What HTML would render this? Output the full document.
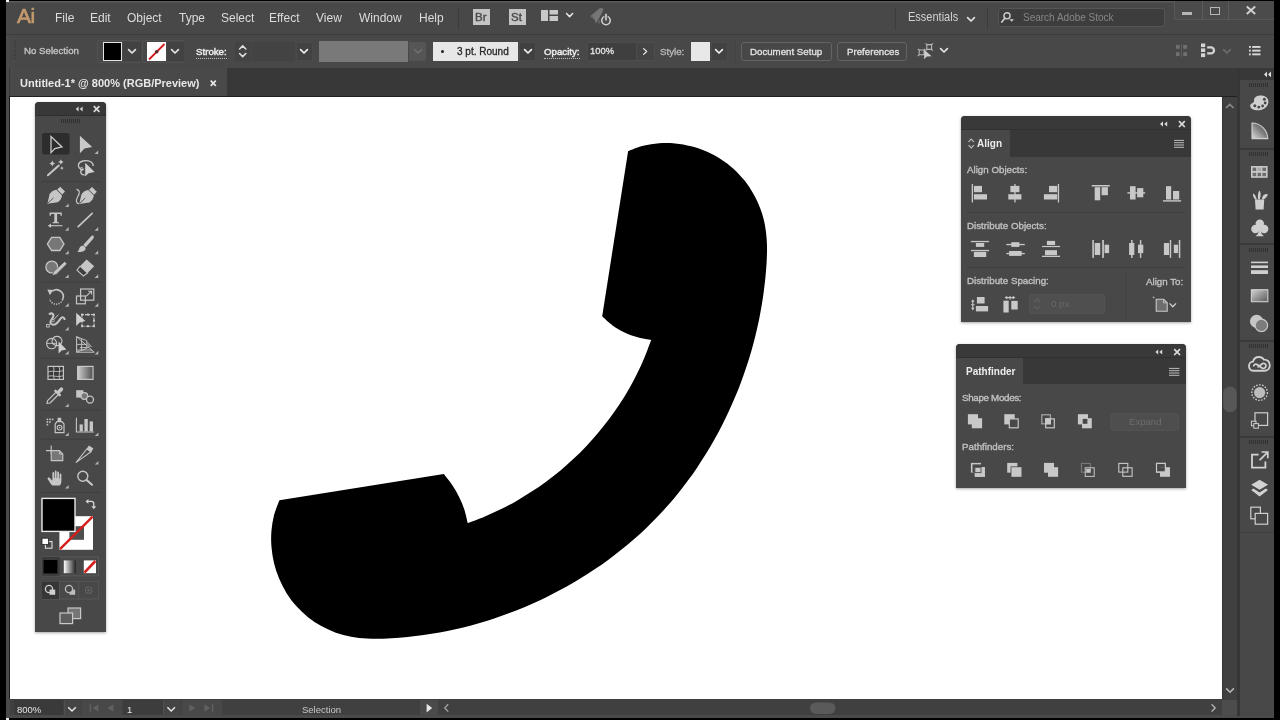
<!DOCTYPE html>
<html>
<head>
<meta charset="utf-8">
<title>Adobe Illustrator</title>
<style>
*{box-sizing:border-box;margin:0;padding:0}
html,body{width:1280px;height:720px;overflow:hidden;background:#000}
body{font-family:"Liberation Sans",sans-serif;position:relative;color:#d6d6d6}
.a{position:absolute}
.t{position:absolute;white-space:nowrap;line-height:1;will-change:transform}
svg{position:absolute;overflow:visible}
/* frame */
#frame{left:6px;top:1px;width:1268px;height:717px;background:#4a4a4a}
#menubar{left:6px;top:1px;width:1268px;height:33px;background:#484848}
#ctrl{left:9px;top:35px;width:1265px;height:33px;background:#484848}
#tabbar{left:9px;top:68px;width:1228px;height:28.5px;background:#383838}
#tab{left:10px;top:68px;width:217px;height:28px;background:#494949}
#canvas{left:10px;top:97px;width:1212px;height:602px;background:#fff}
#vscroll{left:1222px;top:97px;width:15px;height:602px;background:#404040;border-left:1px solid #363636}
#status{left:10px;top:699px;width:1227px;height:16px;background:#404040}
#dock{left:1240px;top:68px;width:34px;height:648px;background:#484848}
#gap{left:1237px;top:68px;width:3px;height:648px;background:#363636}
#mline{left:6px;top:33.5px;width:1268px;height:1.5px;background:#3c3c3c}
.menu{top:12.3px;font-size:12px;color:#dcdcdc}
.cl{font-size:9.7px;color:#cfcfcf;top:46.8px;-webkit-text-stroke:0.3px currentColor}
.cu{color:#ececec;-webkit-text-stroke:0.45px #ececec;border-bottom:1px dotted #bdbdbd;padding-bottom:1.3px}
.cb{color:#e4e4e4}
.panel{background:#4b4b4b;border-radius:3px 3px 0 0;box-shadow:0 1px 3px rgba(0,0,0,.35)}
.st{font-size:9.5px;top:705px}
.pl{font-size:9.75px;color:#c0c0c0;-webkit-text-stroke:0.35px #c0c0c0}
</style>
</head>
<body>
<div class="a" id="frame"></div>
<div class="a" id="menubar"></div>
<div class="a" id="ctrl"></div>
<div class="a" id="tabbar"></div>
<div class="a" id="tab"></div>
<div class="a" style="left:10px;top:95.7px;width:1227px;height:1.3px;background:#202020"></div>
<div class="a" id="canvas"></div>
<div class="a" style="left:9px;top:96px;width:1px;height:603px;background:#1c1c1c"></div>
<div class="a" id="vscroll"></div>
<div class="a" id="status"></div>
<div class="a" id="dock"></div>
<div class="a" id="gap"></div>
<div class="a" id="mline"></div>

<div class="a" style="left:6px;top:1px;width:1268px;height:1.6px;background:linear-gradient(#606060,#4c4c4c)"></div>
<div class="a" style="left:6px;top:0;width:3px;height:1.7px;background:#f4f4f4"></div>
<div class="a" style="left:6px;top:718px;width:3px;height:2px;background:#f0f0f0"></div>
<!-- PHONE -->
<svg id="phone" class="a" style="left:0;top:0" width="1280" height="720" viewBox="0 0 1280 720">
<path id="phonepath" fill="#000" d="M628.1,151.2 C630.6,150.3 638.0,147.1 643.2,145.8 C648.4,144.4 653.7,143.6 659.1,143.2 C664.4,142.8 669.9,142.9 675.2,143.4 C680.6,143.9 686.0,144.9 691.2,146.3 C696.4,147.6 701.6,149.4 706.6,151.6 C711.5,153.7 716.4,156.3 720.9,159.2 C725.4,162.1 729.7,165.4 733.7,168.9 C737.6,172.5 741.3,176.5 744.6,180.6 C747.9,184.8 750.9,189.2 753.5,193.9 C756.1,198.5 758.4,203.4 760.2,208.3 C762.1,213.3 763.6,218.5 764.7,223.7 C765.7,228.9 766.3,234.2 766.7,239.5 C767.1,244.9 767.1,250.3 766.9,255.7 C766.8,261.1 766.4,266.5 765.9,271.9 C765.5,277.3 764.9,282.7 764.2,288.1 C763.6,293.5 762.8,298.8 761.9,304.1 C761.0,309.4 760.0,314.7 759.0,320.0 C757.9,325.2 756.7,330.5 755.4,335.7 C754.1,340.9 752.8,346.1 751.3,351.2 C749.8,356.4 748.2,361.5 746.5,366.6 C744.9,371.6 743.1,376.7 741.2,381.7 C739.4,386.7 737.4,391.7 735.3,396.6 C733.3,401.5 731.1,406.4 728.8,411.3 C726.6,416.1 724.2,421.0 721.8,425.7 C719.3,430.5 716.8,435.2 714.1,439.9 C711.5,444.6 708.8,449.2 706.0,453.8 C703.1,458.4 700.2,462.9 697.2,467.4 C694.2,471.8 691.1,476.3 687.9,480.6 C684.7,484.9 681.4,489.2 678.0,493.4 C674.7,497.6 671.2,501.7 667.6,505.8 C664.1,509.8 660.4,513.8 656.7,517.6 C653.0,521.5 649.1,525.3 645.3,529.0 C641.4,532.7 637.4,536.3 633.3,539.8 C629.3,543.3 625.1,546.8 620.9,550.1 C616.7,553.4 612.5,556.7 608.1,559.9 C603.8,563.0 599.4,566.1 595.0,569.1 C590.5,572.1 586.0,575.0 581.4,577.8 C576.9,580.6 572.2,583.4 567.6,586.0 C562.9,588.6 558.2,591.2 553.4,593.6 C548.7,596.1 543.9,598.4 539.0,600.7 C534.2,602.9 529.3,605.1 524.3,607.2 C519.4,609.3 514.4,611.2 509.4,613.1 C504.4,615.0 499.3,616.8 494.2,618.5 C489.1,620.2 484.0,621.7 478.8,623.2 C473.7,624.7 468.5,626.1 463.3,627.4 C458.1,628.7 452.8,629.8 447.5,630.9 C442.3,632.0 436.9,633.0 431.6,633.8 C426.3,634.7 420.9,635.5 415.6,636.1 C410.2,636.8 404.8,637.4 399.4,637.8 C394.0,638.2 388.5,638.6 383.1,638.7 C377.7,638.9 372.3,638.9 366.9,638.5 C361.6,638.2 356.3,637.7 351.1,636.7 C345.9,635.7 340.7,634.4 335.8,632.7 C330.8,630.9 325.9,628.7 321.3,626.1 C316.7,623.5 312.2,620.5 308.0,617.2 C303.8,613.8 299.9,610.1 296.3,606.1 C292.7,602.1 289.5,597.7 286.6,593.2 C283.8,588.6 281.3,583.8 279.2,578.8 C277.1,573.8 275.4,568.6 274.1,563.4 C272.8,558.1 271.9,552.7 271.5,547.3 C271.0,542.0 271.0,536.5 271.4,531.2 C271.8,525.8 272.7,520.5 274.0,515.3 C275.3,510.2 278.5,502.8 279.4,500.2 L443.8,474.1 C445.2,475.9 449.6,481.2 452.2,485.0 C454.7,488.8 457.1,492.8 459.1,497.0 C461.2,501.1 463.0,505.3 464.4,509.7 C465.8,514.1 467.2,520.9 467.7,523.1 C470.5,522.0 478.9,519.0 484.4,516.7 C489.9,514.4 495.3,511.9 500.7,509.3 C506.0,506.7 511.3,503.9 516.5,500.9 C521.6,498.0 526.7,494.9 531.7,491.6 C536.7,488.4 541.6,485.0 546.4,481.4 C551.2,477.9 555.9,474.2 560.5,470.4 C565.0,466.5 569.5,462.6 573.8,458.5 C578.2,454.4 582.4,450.2 586.5,445.9 C590.6,441.6 594.6,437.1 598.4,432.6 C602.2,428.0 605.9,423.4 609.5,418.6 C613.0,413.8 616.5,408.9 619.7,404.0 C623.0,399.0 626.1,393.9 629.1,388.7 C632.0,383.6 634.8,378.3 637.4,373.0 C640.1,367.6 642.5,362.2 644.8,356.7 C647.1,351.2 650.1,342.8 651.2,340.0 C648.9,339.5 642.1,338.5 637.6,337.2 C633.2,336.0 628.7,334.4 624.6,332.4 C620.4,330.5 616.3,328.2 612.6,325.5 C608.8,322.8 603.9,317.8 602.2,316.3 Z"/>
</svg>

<!-- MENU BAR CONTENT -->
<div id="menucontent">
<div class="t" style="left:17px;top:5.4px;font-size:21px;color:#c2996c;letter-spacing:-0.5px;-webkit-text-stroke:0.7px #c2996c">Ai</div>
<div class="t menu" style="left:55px">File</div>
<div class="t menu" style="left:90px">Edit</div>
<div class="t menu" style="left:126.5px">Object</div>
<div class="t menu" style="left:178.5px">Type</div>
<div class="t menu" style="left:221px">Select</div>
<div class="t menu" style="left:269px">Effect</div>
<div class="t menu" style="left:316px">View</div>
<div class="t menu" style="left:358.5px">Window</div>
<div class="t menu" style="left:419px">Help</div>
<div class="a" style="left:457.5px;top:8px;width:1px;height:22px;background:#3c3c3c"></div>
<div class="a" style="left:473px;top:9px;width:17px;height:16px;background:#c4c4c4"></div>
<div class="t" style="left:475px;top:11.6px;font-size:11.5px;color:#4a4a4a;-webkit-text-stroke:0.4px #4a4a4a">Br</div>
<div class="a" style="left:508.5px;top:9px;width:17px;height:16px;background:#c4c4c4"></div>
<div class="t" style="left:511px;top:11.6px;font-size:11.5px;color:#4a4a4a;-webkit-text-stroke:0.4px #4a4a4a">St</div>
<svg style="left:541px;top:10px" width="17" height="11" viewBox="0 0 17 11"><rect x="0" y="0" width="7" height="11" fill="#c8c8c8"/><rect x="8.5" y="0" width="8.5" height="4.5" fill="#c8c8c8"/><rect x="8.5" y="6" width="8.5" height="5" fill="#c8c8c8"/></svg>
<svg style="left:566.4px;top:13.4px;color:#e6e6e6" width="7.2" height="4.5" viewBox="0 0 8 5"><path d="M0.6,0.6 L4,4 L7.4,0.6" fill="none" stroke="currentColor" stroke-width="1.7" stroke-linecap="round" stroke-linejoin="round"/></svg>
<svg style="left:590px;top:7px" width="23" height="20" viewBox="0 0 23 20">
 <path d="M0.5,9 L10,1 L13.5,1.5 L12,6 L6,16.5 L4.5,12.5 Z" fill="#767676"/>
 <path d="M3,8 L0,10.5 L3.5,10 Z M8.5,13 L8.5,18 L10.5,14 Z" fill="#6a6a6a"/>
 <circle cx="16" cy="13.5" r="4.2" fill="#4b4b4b" stroke="#cfcfcf" stroke-width="1.6"/>
 <rect x="14.4" y="6.5" width="3.2" height="4" fill="#4b4b4b"/>
 <path d="M16,7.2V13" stroke="#cfcfcf" stroke-width="1.6" stroke-linecap="round"/>
</svg>
<div class="a" style="left:895px;top:8px;width:1px;height:22px;background:#3c3c3c"></div>
<div class="t" style="left:907.5px;top:11.5px;font-size:11px;color:#d2d2d2;transform:scaleY(1.08);transform-origin:0 80%">Essentials</div>
<svg style="left:967px;top:16.5px;color:#e0e0e0" width="8" height="5"><path d="M0.6,0.6 L4,4 L7.4,0.6" fill="none" stroke="currentColor" stroke-width="1.7" stroke-linecap="round" stroke-linejoin="round"/></svg>
<div class="a" style="left:987px;top:8px;width:1px;height:22px;background:#3c3c3c"></div>
<div class="a" style="left:998px;top:7.5px;width:167px;height:19.5px;background:#3d3d3d;border-radius:3px;border:1px solid #555"></div>
<svg style="left:1001px;top:12px" width="13" height="11" viewBox="0 0 13 11"><circle cx="6" cy="3.8" r="3.1" fill="none" stroke="#cdcdcd" stroke-width="1.4"/><path d="M3.9,6.2 L0.8,10" stroke="#cdcdcd" stroke-width="1.7" stroke-linecap="round"/><path d="M8.4,7.2 L13,7.2 L10.7,9.8 Z" fill="#cdcdcd"/></svg>
<div class="t" style="left:1023px;top:12.5px;font-size:10px;color:#868686">Search Adobe Stock</div>
<!-- window buttons -->
<div class="a" style="left:1174px;top:1px;width:100px;height:18.5px;background:#4b4b4b;border-left:1px solid #585858;border-bottom:1px solid #585858"></div>
<div class="a" style="left:1201.5px;top:1px;width:1px;height:18px;background:#5c5c5c"></div>
<div class="a" style="left:1227.5px;top:1px;width:1px;height:18px;background:#5c5c5c"></div>
<div class="a" style="left:1182px;top:11.6px;width:10px;height:3.2px;background:#b6b6b6"></div>
<div class="a" style="left:1210px;top:7.2px;width:10px;height:7.6px;border:1.8px solid #b8b8b8"></div>
<svg style="left:1246px;top:6px" width="10" height="8.5" viewBox="0 0 10 8.5"><path d="M0.8,0.5 L9.2,8 M9.2,0.5 L0.8,8" stroke="#d2d2d2" stroke-width="1.9"/></svg>
</div>
<!-- CONTROL BAR CONTENT -->
<div id="ctrlcontent">
<div class="a" style="left:14px;top:41px;width:2px;height:20px;background:repeating-linear-gradient(#3a3a3a 0 1px,#4c4c4c 1px 2px)"></div>
<div class="t cl" style="left:23.5px;color:#c6c6c6;top:45.6px">No Selection</div>
<!-- fill -->
<div class="a" style="left:97px;top:40px;width:44px;height:23px;border:1px solid #525252;border-radius:2px"></div>
<div class="a" style="left:102.5px;top:41.5px;width:19.5px;height:19.5px;background:#000;border:1.5px solid #e4e4e4"></div>
<div class="a" style="left:123px;top:41.5px;width:17.5px;height:19.5px;background:#424242"></div><svg style="left:127.5px;top:49px;color:#e2e2e2" width="8" height="5"><path d="M0.6,0.6 L4,4 L7.4,0.6" fill="none" stroke="currentColor" stroke-width="1.7" stroke-linecap="round" stroke-linejoin="round"/></svg>
<!-- stroke -->
<div class="a" style="left:142px;top:40px;width:42px;height:23px;border:1px solid #525252;border-radius:2px"></div>
<div class="a" style="left:146.5px;top:41.5px;width:19.5px;height:19.5px;background:#fff"></div>
<svg style="left:146.5px;top:41.5px" width="19.5" height="19.5" viewBox="0 0 19.5 19.5"><path d="M2,17.5 L17.5,2" stroke="#d21a1a" stroke-width="1.8"/><circle cx="9.75" cy="9.75" r="1.8" fill="#5a2a2a"/></svg>
<div class="a" style="left:166.5px;top:41.5px;width:17px;height:19.5px;background:#424242"></div><svg style="left:170.5px;top:49px;color:#e2e2e2" width="8" height="5"><path d="M0.6,0.6 L4,4 L7.4,0.6" fill="none" stroke="currentColor" stroke-width="1.7" stroke-linecap="round" stroke-linejoin="round"/></svg>
<div class="t cl cu" style="left:196px">Stroke:</div>
<div class="a" style="left:234.5px;top:41.5px;width:16.5px;height:19px;background:#434343;border-radius:2px 0 0 2px"></div>
<svg style="left:239px;top:44.6px;color:#dedede" width="7.4" height="4.6" viewBox="0 0 8 5"><g transform="translate(0,5) scale(1,-1)"><path d="M0.6,0.6 L4,4 L7.4,0.6" fill="none" stroke="currentColor" stroke-width="1.7" stroke-linecap="round" stroke-linejoin="round"/></g></svg>
<svg style="left:239px;top:53.4px;color:#dedede" width="7.4" height="4.6" viewBox="0 0 8 5"><path d="M0.6,0.6 L4,4 L7.4,0.6" fill="none" stroke="currentColor" stroke-width="1.7" stroke-linecap="round" stroke-linejoin="round"/></svg>
<div class="a" style="left:252px;top:41.5px;width:43px;height:19px;background:#434343"></div>
<div class="a" style="left:295.5px;top:41.5px;width:17.5px;height:19px;background:#424242;border:1px solid #4a4a4a;border-radius:0 2px 2px 0"></div>
<svg style="left:300px;top:49px;color:#efefef" width="8" height="5"><path d="M0.6,0.6 L4,4 L7.4,0.6" fill="none" stroke="currentColor" stroke-width="1.7" stroke-linecap="round" stroke-linejoin="round"/></svg>
<div class="a" style="left:319px;top:41px;width:89px;height:20.5px;background:#797979"></div>
<div class="a" style="left:409px;top:41.5px;width:17px;height:19px;background:#555;border-radius:0 2px 2px 0"></div>
<svg style="left:413.7px;top:49px;color:#6e6e6e" width="8" height="5"><path d="M0.6,0.6 L4,4 L7.4,0.6" fill="none" stroke="currentColor" stroke-width="1.7" stroke-linecap="round" stroke-linejoin="round"/></svg>
<div class="a" style="left:433px;top:41.5px;width:85px;height:19.2px;background:#e7e7e7"></div>
<div class="a" style="left:440.6px;top:49.6px;width:3.2px;height:3.2px;background:#222;border-radius:50%"></div>
<div class="t" style="left:456.8px;top:47.2px;font-size:10px;color:#262626;-webkit-text-stroke:0.3px #262626">3 pt. Round</div>
<div class="a" style="left:519px;top:41.5px;width:17px;height:19px;background:#404040;border:1px solid #4a4a4a;border-radius:0 2px 2px 0"></div>
<svg style="left:523.7px;top:49px;color:#efefef" width="8" height="5"><path d="M0.6,0.6 L4,4 L7.4,0.6" fill="none" stroke="currentColor" stroke-width="1.7" stroke-linecap="round" stroke-linejoin="round"/></svg>
<div class="t cl cu" style="left:543.5px">Opacity:</div>
<div class="a" style="left:586.5px;top:41.5px;width:50px;height:19.5px;background:#3f3f3f;border:1px solid #4c4c4c;border-radius:2px 0 0 2px"></div>
<div class="t cl" style="left:590px;color:#e6e6e6;font-size:9.4px;top:46px">100%</div>
<div class="a" style="left:636.5px;top:41.5px;width:18px;height:19.5px;background:#444;border:1px solid #4e4e4e;border-left:none;border-radius:0 2px 2px 0"></div>
<svg style="left:642.8px;top:48.2px" width="4.4" height="7" viewBox="0 0 5 8"><path d="M0.7,0.7 L4.2,4 L0.7,7.3" fill="none" stroke="#e6e6e6" stroke-width="1.5" stroke-linecap="round" stroke-linejoin="round"/></svg>
<div class="t cl" style="left:660px;color:#bcbcbc">Style:</div>
<div class="a" style="left:690.5px;top:41.5px;width:19.3px;height:19.2px;background:#e8e8e8"></div>
<div class="a" style="left:710.5px;top:41.5px;width:17px;height:19.2px;background:#424242;border:1px solid #4a4a4a;border-radius:0 2px 2px 0"></div>
<svg style="left:715px;top:49px;color:#efefef" width="8" height="5"><path d="M0.6,0.6 L4,4 L7.4,0.6" fill="none" stroke="currentColor" stroke-width="1.7" stroke-linecap="round" stroke-linejoin="round"/></svg>
<div class="a" style="left:734.5px;top:40px;width:1px;height:23px;background:#434343"></div>
<div class="a" style="left:740.5px;top:42px;width:91.5px;height:18.5px;background:#474747;border:1px solid #646464;border-radius:3px"></div>
<div class="t cl cb" style="left:749.5px">Document Setup</div>
<div class="a" style="left:837.3px;top:42px;width:70px;height:18.5px;background:#474747;border:1px solid #646464;border-radius:3px"></div>
<div class="t cl cb" style="left:846.8px">Preferences</div>
<svg style="left:917px;top:42.5px" width="17" height="17" viewBox="0 0 17 17">
 <path d="M2.2,7 H7 V11.8 H2.2 Z M0.8,5.8 L2.2,7 M8.4,5.8 L7,7 M0.8,13 L2.2,11.8" fill="none" stroke="#b8b8b8" stroke-width="1.1"/>
 <path d="M9.8,1.6 H14.6 V6.4 H9.8 Z M8.6,0.4 L9.8,1.6 M15.9,0.4 L14.6,1.6 M15.9,7.6 L14.6,6.4 M8.6,7.6 L9.8,6.4" fill="none" stroke="#b8b8b8" stroke-width="1.1"/>
 <path d="M7.2,6.8 L7.2,16.2 L9.8,13.6 L14.6,13.2 Z" fill="#cfcfcf"/>
</svg>
<svg style="left:940px;top:48.2px;color:#e2e2e2" width="8" height="5"><path d="M0.6,0.6 L4,4 L7.4,0.6" fill="none" stroke="currentColor" stroke-width="1.7" stroke-linecap="round" stroke-linejoin="round"/></svg>
<!-- right icons -->
<svg style="left:1176px;top:44.5px" width="12" height="11.5" viewBox="0 0 12 11.5"><g fill="#707070"><rect x="0" y="0" width="3.6" height="3.8"/><rect x="7.2" y="0" width="3.8" height="3.8"/><rect x="0" y="7.2" width="3.6" height="3.8"/><rect x="7.2" y="7.2" width="3.8" height="3.8"/></g><path d="M5.4,-1 V12.5" stroke="#646464" stroke-width="0.8"/></svg>
<svg style="left:1200.5px;top:43px" width="15" height="15" viewBox="0 0 15 15"><g fill="#d4d4d4"><rect x="0" y="0.5" width="4.2" height="3.6"/><rect x="0" y="5.4" width="4.2" height="3.6"/><rect x="0" y="10.3" width="4.2" height="3.8"/></g><path d="M6.2,4.4 H10 A3,3 0 0 1 10,10.4 H6.2" fill="none" stroke="#d4d4d4" stroke-width="2.3"/></svg>
<svg style="left:1222.5px;top:48.5px;color:#6c6c6c" width="8" height="4.5"><path d="M0.6,0.6 L4,4 L7.4,0.6" fill="none" stroke="currentColor" stroke-width="1.7" stroke-linecap="round" stroke-linejoin="round"/></svg>
<svg style="left:1249px;top:46px" width="12" height="9.5" viewBox="0 0 12 9.5"><g fill="#d8d8d8"><rect x="0" y="0" width="1.8" height="1.9"/><rect x="0" y="3.7" width="1.8" height="1.9"/><rect x="0" y="7.4" width="1.8" height="1.9"/><rect x="3.2" y="0" width="8.3" height="1.9"/><rect x="3.2" y="3.7" width="8.3" height="1.9"/><rect x="3.2" y="7.4" width="8.3" height="1.9"/></g></svg>
<!-- tab -->
<div class="t" style="left:19.5px;top:77.5px;font-size:11px;font-weight:bold;color:#e8e8e8">Untitled-1* @ 800% (RGB/Preview)</div>
<svg style="left:210px;top:79.5px" width="6.5" height="6.5" viewBox="0 0 6.5 6.5"><path d="M0.7,0.7 L5.8,5.8 M5.8,0.7 L0.7,5.8" stroke="#e6e6e6" stroke-width="1.7"/></svg>
</div>
<!-- TOOLBOX -->
<div id="toolbox">
<div class="a panel" style="left:35px;top:102px;width:71px;height:530px;background:#484848;border-radius:4px 4px 0 0"></div>
<div class="a" style="left:35px;top:102px;width:71px;height:14px;background:#383838;border-radius:4px 4px 0 0"></div><div class="a" style="left:35px;top:114.6px;width:71px;height:1.4px;background:#2f2f2f"></div>
<svg style="left:0;top:0" width="1280" height="720" viewBox="0 0 1280 720">
<g fill="#d8d8d8">
 <path d="M75.8,109 L78.6,106.6 L78.6,111.4 Z M79.8,109 L82.6,106.6 L82.6,111.4 Z"/>
</g>
<path d="M93.8,106.2 L99.4,111.8 M99.4,106.2 L93.8,111.8" stroke="#dcdcdc" stroke-width="1.7"/>
<rect x="61" y="119.0" width="1" height="4" fill="#303030"/><rect x="63" y="119.0" width="1" height="4" fill="#303030"/><rect x="65" y="119.0" width="1" height="4" fill="#303030"/><rect x="67" y="119.0" width="1" height="4" fill="#303030"/><rect x="69" y="119.0" width="1" height="4" fill="#303030"/><rect x="71" y="119.0" width="1" height="4" fill="#303030"/><rect x="73" y="119.0" width="1" height="4" fill="#303030"/><rect x="75" y="119.0" width="1" height="4" fill="#303030"/><rect x="77" y="119.0" width="1" height="4" fill="#303030"/><rect x="79" y="119.0" width="1" height="4" fill="#303030"/>
<g stroke="#3f3f3f" stroke-width="1">
 <path d="M41,181.5 H100 M41,282 H100 M41,358.3 H100 M41,410 H100 M41,439.3 H100 M41,492.5 H100"/>
</g>
<!-- row1 -->
<rect x="42" y="133" width="27.5" height="21.5" rx="2.5" fill="#2d2d2d"/>
<path d="M51,136.6 L51,152.6 L54.9,148.6 L62,147 Z" fill="none" stroke="#c9c9c9" stroke-width="1.3" stroke-linejoin="miter"/>
<path d="M79.9,135.8 L79.9,153.2 L84.5,148.5 L92.2,146.9 Z" fill="#c9c9c9"/>
<path d="M94.6,154.0 L98.2,150.4 L98.2,154.0 Z" fill="#b4b4b4"/>
<!-- row2 wand + lasso -->
<path d="M47.9,175.3 L58.8,165.6" stroke="#c6c6c6" stroke-width="2" stroke-linecap="round"/>
<path d="M52.3,160.6 l0.9,2 2,0.9 -2,0.9 -0.9,2 -0.9,-2 -2,-0.9 2,-0.9z M60.9,159.2 l0.9,1.9 1.9,0.9 -1.9,0.9 -0.9,1.9 -0.9,-1.9 -1.9,-0.9 1.9,-0.9z M61.9,166.2 l0.6,1.3 1.3,0.6 -1.3,0.6 -0.6,1.3 -0.6,-1.3 -1.3,-0.6 1.3,-0.6z" fill="#c6c6c6"/>
<path d="M84.8,174.8 C80.5,175.5 79.5,171 82.5,169.6 C77.5,168.5 76.5,162.6 83,161 C88.5,159.6 93.5,162 93.2,166" fill="none" stroke="#c6c6c6" stroke-width="1.3"/>
<circle cx="81.6" cy="168.8" r="1.4" fill="none" stroke="#c6c6c6" stroke-width="1"/>
<path d="M85.2,162.8 L85.2,176.6 L88.6,173.2 L94.6,172 Z" fill="#d0d0d0"/>
<!-- row3 pen + curvature -->
<path d="M47.4,203.8 L49.6,194.2 C51,191.6 54,190 56.4,189.8 L62,195.4 C61.8,197.8 60.2,200.8 57.6,202.2 Z" fill="#c6c6c6"/>
<path d="M57.2,189.6 L60.2,186.8 L65,191.6 L62.2,194.6 Z" fill="#c6c6c6"/>
<path d="M47.9,203.3 L53.5,197.7" stroke="#484848" stroke-width="0.9"/>
<path d="M79.2,204 L81.4,194.4 C82.8,191.8 85.8,190.2 88.2,190 L93.8,195.6 C93.6,198 92,201 89.4,202.4 Z" fill="#c6c6c6"/>
<path d="M89,189.8 L92,187 L96.8,191.8 L94,194.8 Z" fill="#c6c6c6"/>
<path d="M79.7,203.5 L85.3,197.9" stroke="#484848" stroke-width="0.9"/>
<path d="M76.4,189.4 C80.5,190 79.6,194 77.6,197 C75.6,200.2 76,203 78.8,203.8" fill="none" stroke="#c6c6c6" stroke-width="1.2"/>
<path d="M65.1,207.0 L68.7,203.4 L68.7,207.0 Z" fill="#b4b4b4"/>
<!-- row4 type + line -->
<path d="M49.6,212.4 H61.8 V215.8 H60.6 L60.2,214 H57.1 V221.8 L58.8,222.2 V223.2 H52.6 V222.2 L54.3,221.8 V214 H51.2 L50.8,215.8 H49.6 Z" fill="#c6c6c6"/>
<path d="M49,225.7 H62.4" stroke="#c6c6c6" stroke-width="1.1"/>
<path d="M47.8,225.7 L51,223.6 L51,227.8 Z" fill="#c6c6c6"/>
<path d="M78.2,226.6 L92.2,213.4" stroke="#c6c6c6" stroke-width="1.7" stroke-linecap="round"/>
<path d="M65.1,230.7 L68.7,227.1 L68.7,230.7 Z" fill="#b4b4b4"/><path d="M94.6,230.7 L98.2,227.1 L98.2,230.7 Z" fill="#b4b4b4"/>
<!-- row5 polygon + brush -->
<path d="M47.4,243.9 L51.6,237.3 H59.8 L64,243.9 L59.8,250.5 H51.6 Z" fill="#777" stroke="#c6c6c6" stroke-width="1.3"/>
<path d="M93.9,236.6 C93.6,235.4 92.4,235 91.6,235.8 L83.2,245 L85.8,247.2 L93.4,238.4 Z" fill="#c6c6c6"/>
<path d="M77.2,251.9 C79.4,250.8 78.6,247.6 81.2,246 C83.2,244.9 85.8,246.4 85.6,248.8 C85.2,251.6 81,252.4 77.2,251.9 Z" fill="#c6c6c6"/>
<path d="M65.1,254.2 L68.7,250.6 L68.7,254.2 Z" fill="#b4b4b4"/><path d="M94.6,254.2 L98.2,250.6 L98.2,254.2 Z" fill="#b4b4b4"/>
<!-- row6 shaper + eraser -->
<circle cx="51.8" cy="267" r="5.9" fill="#777" stroke="#c6c6c6" stroke-width="1.3"/>
<path d="M64.6,261.4 L67,263.8 L56.2,274.4 L52.2,275.6 L53.6,271.8 Z" fill="#c6c6c6" stroke="#484848" stroke-width="0.6"/>
<path d="M86.6,259.4 L94.2,266.2 L87.6,273 L80,266.2 Z" fill="#c6c6c6"/>
<path d="M80,266.2 L87.6,273 L83.4,276 L77,270.2 Z" fill="#3e3e3e" stroke="#c6c6c6" stroke-width="1.1"/>
<path d="M65.1,277.9 L68.7,274.3 L68.7,277.9 Z" fill="#b4b4b4"/><path d="M94.6,277.9 L98.2,274.3 L98.2,277.9 Z" fill="#b4b4b4"/>
<!-- row7 rotate + scale -->
<path d="M52.4,291.2 A6.8,6.8 0 0 1 62.6,299.6" fill="none" stroke="#c6c6c6" stroke-width="1.6"/>
<path d="M62.6,299.6 A6.8,6.8 0 0 1 49.6,299" fill="none" stroke="#c6c6c6" stroke-width="1.5" stroke-dasharray="1.1 1.3"/>
<path d="M47.4,289.6 L53.4,290 L49.8,295.2 Z" fill="#c6c6c6"/>
<rect x="80.6" y="289" width="13.2" height="11.2" fill="none" stroke="#c6c6c6" stroke-width="1.2"/>
<rect x="76.5" y="296" width="8.8" height="7.8" fill="none" stroke="#c6c6c6" stroke-width="1.2"/>
<path d="M86,296.4 L91.4,291.4 M88.2,291.2 H91.6 V294.6" fill="none" stroke="#c6c6c6" stroke-width="1.1"/>
<path d="M65.1,306.7 L68.7,303.1 L68.7,306.7 Z" fill="#b4b4b4"/><path d="M94.7,306.7 L98.3,303.1 L98.3,306.7 Z" fill="#b4b4b4"/>
<!-- row8 width + free transform -->
<path d="M49,314.6 C52,312 54.6,314.2 52.8,317.4 C51,320.6 48.8,322.8 52,324.4 C55.8,326 58.4,321.6 60.4,318.8 C62,316.6 64.6,316.8 64.6,320" fill="none" stroke="#c6c6c6" stroke-width="2"/>
<path d="M53,320.4 L58.4,314.6" stroke="#c6c6c6" stroke-width="1"/>
<rect x="46.6" y="324.4" width="2.6" height="2.6" fill="none" stroke="#c6c6c6" stroke-width="0.9"/>
<circle cx="53" cy="320.6" r="1.3" fill="#484848" stroke="#c6c6c6" stroke-width="0.8"/>
<rect x="82" y="314.6" width="12" height="11.6" fill="none" stroke="#c6c6c6" stroke-width="1.1" stroke-dasharray="2 1"/>
<g fill="#c6c6c6"><rect x="81" y="313.6" width="2" height="2"/><rect x="93" y="313.6" width="2" height="2"/><rect x="81" y="325.2" width="2" height="2"/><rect x="93" y="325.2" width="2" height="2"/><rect x="87" y="313.6" width="2" height="2"/><rect x="87" y="325.2" width="2" height="2"/><rect x="93" y="319.4" width="2" height="2"/></g>
<path d="M76.2,312.8 L76.2,326 L79.6,322.6 L85.4,321 Z" fill="#d0d0d0"/>
<path d="M65.1,330.4 L68.7,326.8 L68.7,330.4 Z" fill="#b4b4b4"/>
<!-- row9 shape builder + perspective -->
<ellipse cx="51.6" cy="343.6" rx="5" ry="5.2" fill="none" stroke="#c6c6c6" stroke-width="1.1"/>
<ellipse cx="57" cy="341" rx="5" ry="4.6" fill="none" stroke="#c6c6c6" stroke-width="1.1"/>
<path d="M47,343.4 H56" stroke="#c6c6c6" stroke-width="0.9"/>
<path d="M58.6,341.6 L58.6,353.4 L61.6,350.4 L66.4,349.4 Z" fill="#d0d0d0"/>
<path d="M76.6,336.6 L76.6,352.2 L94.2,352.2 Z" fill="none" stroke="#c6c6c6" stroke-width="1"/>
<path d="M76.6,336.6 L86.6,340.6 L86.6,348.4 L76.6,352.2 M81.6,338.6 V350.4 M76.6,344.4 H86.6 M76.6,350 H92 M80,347.6 H89" fill="none" stroke="#c6c6c6" stroke-width="0.9"/>
<path d="M86.6,340.6 L92.6,347 H86.6 Z" fill="#8a8a8a"/>
<path d="M65.1,354.4 L68.7,350.8 L68.7,354.4 Z" fill="#b4b4b4"/><path d="M94.7,354.4 L98.3,350.8 L98.3,354.4 Z" fill="#b4b4b4"/>
<!-- row10 mesh + gradient -->
<rect x="48" y="366.4" width="15.4" height="13" fill="#383838" stroke="#c6c6c6" stroke-width="1.2"/>
<path d="M48,372 C53,370 58,373 63.4,370.4 M53.4,366.4 C55,370 52,375 54.6,379.4 M58.8,366.4 C61,370 58,375 59.6,379.4 M48,376.4 C52,374.6 58,378 63.4,375.6" fill="none" stroke="#c6c6c6" stroke-width="0.9"/>
<defs><linearGradient id="gr1" x1="0" x2="1" y1="0" y2="0"><stop offset="0" stop-color="#cfcfcf"/><stop offset="1" stop-color="#4e4e4e"/></linearGradient>
<linearGradient id="gr2" x1="0" x2="1" y1="0" y2="0"><stop offset="0" stop-color="#fff"/><stop offset="1" stop-color="#222"/></linearGradient></defs>
<rect x="77.6" y="366.4" width="15.4" height="13" fill="url(#gr1)" stroke="#c6c6c6" stroke-width="1.2"/>
<!-- row11 eyedropper + blend -->
<path d="M47,403.4 L47.6,400.6 L56.6,391.6 L59,394 L50,403 Z" fill="#484848" stroke="#c6c6c6" stroke-width="1.2" stroke-linejoin="round"/>
<path d="M55.4,390.8 L59.8,395.2" stroke="#c6c6c6" stroke-width="2.4" stroke-linecap="round"/>
<path d="M58.6,392 L61.4,389.2" stroke="#c6c6c6" stroke-width="3.6" stroke-linecap="round"/>
<rect x="76.2" y="390.2" width="7.2" height="7.4" fill="#c6c6c6"/>
<circle cx="84.4" cy="396" r="3.3" fill="#777" stroke="#c6c6c6" stroke-width="1.2"/>
<circle cx="90" cy="399.6" r="3.5" fill="#484848" stroke="#c6c6c6" stroke-width="1.3"/>
<path d="M65.1,407.0 L68.7,403.4 L68.7,407.0 Z" fill="#b4b4b4"/>
<!-- row12 sprayer + graph -->
<g fill="#c6c6c6"><rect x="46.6" y="418.6" width="1.6" height="1.6"/><rect x="49.2" y="418.6" width="1.6" height="1.6"/><rect x="51.8" y="418.6" width="1.6" height="1.6"/><rect x="46.6" y="421.2" width="1.6" height="1.6"/><rect x="49.2" y="421.2" width="1.6" height="1.6"/><rect x="46.6" y="423.8" width="1.6" height="1.6"/><rect x="57.6" y="417.8" width="3.6" height="3.4"/></g>
<path d="M55.2,432.6 V424 L57,421.6 H62 L64,424 V432.6 Z" fill="none" stroke="#c6c6c6" stroke-width="1.2"/>
<circle cx="59.6" cy="427.6" r="2.4" fill="none" stroke="#c6c6c6" stroke-width="1.1"/><circle cx="59.6" cy="427.6" r="0.8" fill="#c6c6c6"/>
<path d="M76.4,417.8 V432 H93.8" fill="none" stroke="#c6c6c6" stroke-width="1.1"/>
<g fill="#c6c6c6"><rect x="79.6" y="424.4" width="3.2" height="7"/><rect x="84.4" y="419" width="3.4" height="12.4"/><rect x="89.6" y="421.4" width="3.4" height="10"/></g>
<path d="M65.1,436.0 L68.7,432.4 L68.7,436.0 Z" fill="#b4b4b4"/><path d="M94.8,436.0 L98.4,432.4 L98.4,436.0 Z" fill="#b4b4b4"/>
<!-- row13 artboard + slice -->
<path d="M51.2,445.4 V454 M46,450.6 H55" stroke="#c6c6c6" stroke-width="1.1"/>
<path d="M51.2,450.6 H59.4 L62.8,454 V460.6 H51.2 Z" fill="#777" stroke="#c6c6c6" stroke-width="1.1"/>
<path d="M59.4,450.6 V454 H62.8" fill="none" stroke="#c6c6c6" stroke-width="0.9"/>
<path d="M76.2,462.4 L86.8,449 L91,451.8 Z" fill="#484848" stroke="#c6c6c6" stroke-width="1.1" stroke-linejoin="round"/>
<path d="M86.6,448.8 L89,445.6 L93.4,448.6 L91.2,452 Z" fill="#c6c6c6"/>
<path d="M94.8,464.6 L98.4,461.0 L98.4,464.6 Z" fill="#b4b4b4"/>
<!-- row14 hand + zoom -->
<path d="M52.2,485.6 C50,483 48.6,480.6 47.6,478.8 C47.2,477.6 48.8,477 49.8,478 L52.4,480.8 V473 C52.4,471.8 54.2,471.8 54.2,473 V478 H54.8 V471.4 C54.8,470.2 56.6,470.2 56.6,471.4 V478 H57.2 V472.4 C57.2,471.2 59,471.2 59,472.4 V478.4 H59.6 V474.4 C59.6,473.2 61.4,473.2 61.4,474.4 V481 C61.4,483 60.6,484.6 59.8,485.6 Z" fill="#c6c6c6"/>
<circle cx="82.8" cy="476.2" r="5" fill="none" stroke="#c6c6c6" stroke-width="1.4"/>
<path d="M86.6,480 L92,484.8" stroke="#c6c6c6" stroke-width="2.2" stroke-linecap="round"/>
<path d="M65.1,488.6 L68.7,485.0 L68.7,488.6 Z" fill="#b4b4b4"/>
<!-- fill/stroke -->
<rect x="59.4" y="516.2" width="33.6" height="33.6" fill="#fff"/>
<rect x="69.4" y="526.2" width="14.6" height="13.6" fill="#4f4f4f"/>
<path d="M60,549.2 L92.6,516.6" stroke="#d41f1f" stroke-width="2.4"/>
<rect x="42" y="498.4" width="33" height="33" fill="#000" stroke="#ececec" stroke-width="1.4"/>
<path d="M87.6,501.4 H91.4 A2.4,2.4 0 0 1 93.8,503.8 V506.6" fill="none" stroke="#d6d6d6" stroke-width="1.3"/>
<path d="M85.4,501.4 L88.4,499 V503.8 Z M93.8,509.2 L91.4,506.2 H96.2 Z" fill="#d6d6d6"/>
<rect x="45.4" y="541.6" width="6.6" height="6.6" fill="#484848" stroke="#e0e0e0" stroke-width="1.1"/>
<rect x="42" y="538.2" width="6.4" height="6.4" fill="#fff" stroke="#222" stroke-width="0.8"/>
<!-- color row -->
<rect x="41.6" y="557" width="56.8" height="18.8" fill="none" stroke="#5a5a5a" stroke-width="1"/>
<rect x="41.6" y="557" width="18" height="18.8" fill="#3a3a3a"/>
<rect x="43.6" y="560" width="13.8" height="13.4" fill="#000"/>
<rect x="63.8" y="560.4" width="12" height="12.8" fill="url(#gr2)"/>
<rect x="83.8" y="560.4" width="12.2" height="12.8" fill="#fff"/>
<path d="M84.4,572.6 L95.4,561" stroke="#d41f1f" stroke-width="2.6"/>
<!-- draw modes -->
<rect x="41.6" y="581.6" width="56.8" height="17.4" fill="none" stroke="#565656" stroke-width="1"/>
<rect x="41.6" y="581.6" width="17.6" height="17.4" fill="#363636"/>
<path d="M59.6,581.6 V599 M78.6,581.6 V599" stroke="#565656" stroke-width="1"/>
<circle cx="49" cy="589" r="3.6" fill="#3a3a3a" stroke="#cfcfcf" stroke-width="1.3"/>
<rect x="49.6" y="589.6" width="5.6" height="5.2" fill="#cfcfcf"/>
<rect x="69.6" y="589.6" width="5.6" height="5.2" fill="#bdbdbd"/>
<circle cx="69" cy="589" r="3.6" fill="#484848" stroke="#bdbdbd" stroke-width="1.3"/>
<circle cx="88.6" cy="590.2" r="3.2" fill="none" stroke="#646464" stroke-width="1.1"/>
<circle cx="88.6" cy="590.2" r="1.2" fill="#646464"/>
<!-- screen mode -->
<rect x="68" y="608" width="12.6" height="10.6" fill="#757575" stroke="#c9c9c9" stroke-width="1.2"/>
<rect x="60" y="613" width="12.6" height="10.6" fill="#5e5e5e" stroke="#c9c9c9" stroke-width="1.2"/>
</svg>
</div>
<!-- ALIGN -->
<div id="align">
<div class="a panel" style="left:961px;top:116px;width:229.6px;height:206.4px;background:#484848;border-radius:4px 4px 0 0"></div>
<div class="a" style="left:961px;top:116px;width:229.6px;height:14px;background:#393939;border-radius:4px 4px 0 0"></div>
<div class="a" style="left:961px;top:130px;width:229.6px;height:27px;background:#383838"></div><div class="a" style="left:961px;top:129.2px;width:229.6px;height:1px;background:#303030"></div>
<div class="a" style="left:961px;top:130px;width:48.6px;height:27px;background:#484848"></div>
<div class="t" style="left:977px;top:138.6px;font-size:10px;font-weight:bold;color:#ececec">Align</div>
<div class="t pl" style="left:967px;top:165px">Align Objects:</div>
<div class="t pl" style="left:967px;top:220.6px">Distribute Objects:</div>
<div class="t pl" style="left:967px;top:276.2px">Distribute Spacing:</div>
<div class="t pl" style="left:1146px;top:277.2px">Align To:</div>
<div class="a" style="left:1028.6px;top:293.5px;width:76.7px;height:20.8px;background:#4f4f4f;border:1px solid #535353;border-radius:2px"></div>
<div class="t" style="left:1050.8px;top:299.3px;font-size:9.7px;color:#686868">0 px</div>
<svg style="left:0;top:0" width="1280" height="720" viewBox="0 0 1280 720">
<path d="M1160,124 L1163,121.4 V126.6 Z M1164.2,124 L1167.2,121.4 V126.6 Z" fill="#dcdcdc"/>
<path d="M1179,121.2 L1184.8,127 M1184.8,121.2 L1179,127" stroke="#dcdcdc" stroke-width="1.7"/>
<path d="M1174,140.4 H1184 M1174,142.7 H1184 M1174,145 H1184 M1174,147.3 H1184" stroke="#bdbdbd" stroke-width="1"/>
<path d="M968.6,141.8 L971.2,139 L973.8,141.8 M968.6,145.2 L971.2,148 L973.8,145.2" fill="none" stroke="#c4c4c4" stroke-width="1.1"/>
<path d="M967,212.3 H1184.6 M967,267.4 H1184.6" stroke="#404040" stroke-width="1.2"/>
<path d="M1125.6,272.6 V320.6" stroke="#434343" stroke-width="1.2"/>
<rect x="971.7" y="184.0" width="1.3" height="18.5" fill="#c8c8c8" /><rect x="973.9" y="185.9" width="8.1" height="6.3" fill="#c8c8c8" /><rect x="973.9" y="194.2" width="13.1" height="5.3" fill="#c8c8c8" /><rect x="1014.3" y="184.0" width="1.3" height="18.5" fill="#c8c8c8" /><rect x="1010.4" y="185.9" width="9.0" height="6.3" fill="#c8c8c8" /><rect x="1008.3" y="194.2" width="13.1" height="5.3" fill="#c8c8c8" /><rect x="1057.8" y="184.0" width="1.3" height="18.5" fill="#c8c8c8" /><rect x="1049.0" y="185.9" width="8.2" height="6.3" fill="#c8c8c8" /><rect x="1043.9" y="194.2" width="13.3" height="5.3" fill="#c8c8c8" /><rect x="1091.7" y="185.0" width="18.1" height="1.5" fill="#c8c8c8" /><rect x="1094.7" y="187.2" width="5.5" height="13.1" fill="#c8c8c8" /><rect x="1101.6" y="187.2" width="6.3" height="8.0" fill="#c8c8c8" /><rect x="1127.4" y="192.2" width="17.8" height="1.4" fill="#c8c8c8" /><rect x="1130.0" y="186.2" width="5.6" height="13.3" fill="#c8c8c8" /><rect x="1137.1" y="188.1" width="6.2" height="9.2" fill="#c8c8c8" /><rect x="1163.0" y="200.2" width="18.1" height="1.4" fill="#c8c8c8" /><rect x="1166.0" y="186.2" width="5.2" height="13.3" fill="#c8c8c8" /><rect x="1173.0" y="191.0" width="6.2" height="8.5" fill="#c8c8c8" /><rect x="970.9" y="240.9" width="18.2" height="1.3" fill="#c8c8c8" /><rect x="975.9" y="243.0" width="8.3" height="3.9" fill="#c8c8c8" /><rect x="970.9" y="249.9" width="18.2" height="1.3" fill="#c8c8c8" /><rect x="973.9" y="251.9" width="12.3" height="5.1" fill="#c8c8c8" /><rect x="1006.3" y="243.9" width="18.5" height="1.3" fill="#c8c8c8" /><rect x="1011.3" y="242.2" width="8.1" height="4.7" fill="#c8c8c8" /><rect x="1006.3" y="252.9" width="18.5" height="1.3" fill="#c8c8c8" /><rect x="1009.1" y="251.0" width="12.5" height="4.9" fill="#c8c8c8" /><rect x="1046.9" y="240.9" width="8.2" height="4.1" fill="#c8c8c8" /><rect x="1042.0" y="245.9" width="18.1" height="1.2" fill="#c8c8c8" /><rect x="1045.0" y="250.2" width="12.0" height="4.9" fill="#c8c8c8" /><rect x="1042.0" y="255.7" width="18.1" height="1.3" fill="#c8c8c8" /><rect x="1092.3" y="240.0" width="1.6" height="17.9" fill="#c8c8c8" /><rect x="1094.7" y="243.0" width="5.5" height="12.0" fill="#c8c8c8" /><rect x="1102.2" y="240.0" width="1.7" height="17.9" fill="#c8c8c8" /><rect x="1104.6" y="244.7" width="4.5" height="8.4" fill="#c8c8c8" /><rect x="1131.1" y="240.0" width="1.5" height="17.9" fill="#c8c8c8" /><rect x="1129.1" y="243.0" width="5.2" height="12.0" fill="#c8c8c8" /><rect x="1139.9" y="240.0" width="1.4" height="17.9" fill="#c8c8c8" /><rect x="1138.0" y="244.7" width="5.3" height="8.4" fill="#c8c8c8" /><rect x="1163.9" y="243.0" width="5.2" height="12.0" fill="#c8c8c8" /><rect x="1169.8" y="240.0" width="1.4" height="17.9" fill="#c8c8c8" /><rect x="1173.8" y="244.7" width="4.3" height="8.4" fill="#c8c8c8" /><rect x="1178.8" y="240.0" width="1.5" height="17.9" fill="#c8c8c8" /><rect x="976.9" y="297.0" width="7.7" height="6.5" fill="#c8c8c8" /><rect x="975.9" y="306.0" width="12.2" height="5.4" fill="#c8c8c8" /><path d="M972.8,300.6 V309 M971,304.8 H974.6" stroke="#c8c8c8" stroke-width="1.1"/><path d="M972.8,299.2 L974.6,301.8 H971 Z M972.8,310.4 L974.6,307.8 H971 Z" fill="#c8c8c8"/><rect x="1003.4" y="300.7" width="5.3" height="11.8" fill="#c8c8c8" /><rect x="1011.3" y="300.9" width="6.4" height="8.6" fill="#c8c8c8" /><path d="M1006,297.6 H1014 M1010,296 V299.6" stroke="#c8c8c8" stroke-width="1.1"/><path d="M1004.6,297.6 L1007.2,295.8 V299.4 Z M1015.4,297.6 L1012.8,295.8 V299.4 Z" fill="#c8c8c8"/>
<path d="M1034,302.2 L1037.2,299 L1040.4,302.2 M1034,306 L1037.2,309.2 L1040.4,306" fill="none" stroke="#5e5e5e" stroke-width="1.3"/>
<path d="M1156.2,299.2 H1163.6 L1167.2,302.8 V311.2 H1156.2 Z" fill="#6e6e6e" stroke="#c8c8c8" stroke-width="1.1"/>
<path d="M1163.6,299.2 V302.8 H1167.2" fill="none" stroke="#c8c8c8" stroke-width="0.9"/>
<path d="M1152.8,297.4 h1.6 M1153.6,296.6 v1.6" stroke="#c8c8c8" stroke-width="0.8"/>
<path d="M1169.6,303.4 L1172.8,306.8 L1176,303.4" fill="none" stroke="#d0d0d0" stroke-width="1.3"/>
</svg>
</div>
<!-- PATHFINDER -->
<div id="pathfinder">
<div class="a panel" style="left:956px;top:344.3px;width:229.6px;height:144px;background:#484848;border-radius:4px 4px 0 0"></div>
<div class="a" style="left:956px;top:344.3px;width:229.6px;height:13.7px;background:#393939;border-radius:4px 4px 0 0"></div>
<div class="a" style="left:956px;top:358px;width:229.6px;height:26.4px;background:#383838"></div><div class="a" style="left:956px;top:357.2px;width:229.6px;height:1px;background:#303030"></div>
<div class="a" style="left:956px;top:358px;width:67.2px;height:26.4px;background:#484848"></div>
<div class="t" style="left:966px;top:366.6px;font-size:10px;font-weight:bold;color:#ececec">Pathfinder</div>
<div class="t pl" style="left:962.3px;top:393.4px;letter-spacing:-0.3px">Shape Modes:</div>
<div class="t pl" style="left:962.3px;top:441.6px">Pathfinders:</div>
<div class="a" style="left:1110px;top:412.8px;width:69px;height:18.2px;background:#4e4e4e;border:1px solid #525252;border-radius:3px"></div>
<div class="t" style="left:1129px;top:417.4px;font-size:9.6px;color:#6c6c6c">Expand</div>
<svg style="left:0;top:0" width="1280" height="720" viewBox="0 0 1280 720">
<path d="M1155.4,352 L1158.2,349.6 V354.4 Z M1159.4,352 L1162.2,349.6 V354.4 Z" fill="#dcdcdc"/>
<path d="M1174.2,349.2 L1180,355 M1180,349.2 L1174.2,355" stroke="#dcdcdc" stroke-width="1.7"/>
<path d="M1169,368.4 H1179.4 M1169,370.7 H1179.4 M1169,373 H1179.4 M1169,375.3 H1179.4" stroke="#bdbdbd" stroke-width="1"/>
<rect x="967.9" y="414.2" width="10.1" height="10.2" fill="#c8c8c8" /><rect x="971.8" y="418.2" width="10.3" height="10.1" fill="#c8c8c8" /><rect x="1004.3" y="414.2" width="10.4" height="10.2" fill="#c8c8c8" /><rect x="1009.3" y="418.9" width="8.9" height="8.9" fill="#484848" stroke="#c8c8c8" stroke-width="1.2"/><rect x="1041.8" y="414.8" width="8.6" height="9.0" fill="none" stroke="#a8a8a8" stroke-width="1.2"/><rect x="1045.7" y="418.9" width="8.6" height="8.9" fill="none" stroke="#c8c8c8" stroke-width="1.2"/><rect x="1045.1" y="418.2" width="5.9" height="6.1" fill="#c8c8c8" /><rect x="1077.9" y="414.2" width="10.1" height="10.2" fill="#c8c8c8" /><rect x="1082.0" y="418.2" width="9.8" height="10.1" fill="#c8c8c8" /><rect x="1082.7" y="418.9" width="4.7" height="4.9" fill="#474747" /><rect x="970.9" y="462.9" width="10.1" height="9.8" fill="#c8c8c8" /><rect x="974.8" y="467.2" width="10.1" height="9.6" fill="#c8c8c8" /><rect x="975.2" y="467.7" width="5.3" height="4.5" fill="#c8c8c8" stroke="#484848" stroke-width="0.9"/><rect x="972.5" y="464.4" width="8.5" height="8.3" fill="#484848"/><rect x="974.8" y="467.2" width="10.1" height="9.6" fill="#c8c8c8" /><rect x="974.9" y="467.3" width="6.1" height="5.3" fill="#c8c8c8" stroke="#484848" stroke-width="0.9"/><rect x="976.6" y="468.9" width="6.7" height="6.5" fill="none" stroke="#484848" stroke-width="0"/><rect x="1007.2" y="462.9" width="10.2" height="9.8" fill="#c8c8c8" /><rect x="1010.6" y="466.4" width="10.9" height="10.4" fill="#484848" /><rect x="1011.4" y="467.2" width="10.1" height="9.6" fill="#c8c8c8" /><rect x="1044.0" y="462.9" width="10.0" height="9.8" fill="#c8c8c8" /><rect x="1048.0" y="467.2" width="10.1" height="9.6" fill="#c8c8c8" /><rect x="1081.4" y="463.4" width="8.8" height="8.8" fill="none" stroke="#7e7e7e" stroke-width="1.0"/><rect x="1085.2" y="467.8" width="9.0" height="8.6" fill="none" stroke="#c8c8c8" stroke-width="1.0"/><rect x="1086.2" y="468.8" width="4.5" height="3.9" fill="#c8c8c8" /><rect x="1118.8" y="463.4" width="9.0" height="8.7" fill="none" stroke="#c8c8c8" stroke-width="1.1"/><rect x="1122.8" y="467.8" width="9.3" height="8.5" fill="none" stroke="#c8c8c8" stroke-width="1.1"/><rect x="1156.5" y="463.4" width="8.9" height="8.7" fill="none" stroke="#c8c8c8" stroke-width="1.1"/><rect x="1160.0" y="467.2" width="10.0" height="9.6" fill="#c8c8c8" /><rect x="1160.0" y="467.2" width="4.9" height="4.3" fill="#484848" /><rect x="1156.5" y="463.4" width="8.9" height="8.7" fill="none" stroke="#c8c8c8" stroke-width="1.1"/>
</svg>
</div>
<!-- DOCK -->
<div id="dockcontent">
<div class="a" style="left:1240px;top:68px;width:34px;height:12px;background:#383838"></div>
<div class="a" style="left:1240px;top:147.6px;width:34px;height:2px;background:#3a3a3a"></div>
<div class="a" style="left:1240px;top:243px;width:34px;height:2px;background:#3a3a3a"></div>
<div class="a" style="left:1240px;top:339.6px;width:34px;height:2px;background:#3a3a3a"></div>
<div class="a" style="left:1240px;top:435.7px;width:34px;height:2px;background:#3a3a3a"></div>
<div class="a" style="left:1240px;top:532px;width:34px;height:1.2px;background:#3e3e3e"></div>
<svg style="left:0;top:0" width="1280" height="720" viewBox="0 0 1280 720">
<path d="M1264,74.4 L1267,71.6 V77.2 Z M1268,74.4 L1271,71.6 V77.2 Z" fill="#e0e0e0"/>
<rect x="1249" y="83.0" width="1" height="4" fill="#303030"/><rect x="1251" y="83.0" width="1" height="4" fill="#303030"/><rect x="1253" y="83.0" width="1" height="4" fill="#303030"/><rect x="1255" y="83.0" width="1" height="4" fill="#303030"/><rect x="1257" y="83.0" width="1" height="4" fill="#303030"/><rect x="1259" y="83.0" width="1" height="4" fill="#303030"/><rect x="1261" y="83.0" width="1" height="4" fill="#303030"/><rect x="1263" y="83.0" width="1" height="4" fill="#303030"/><rect x="1265" y="83.0" width="1" height="4" fill="#303030"/><rect x="1267" y="83.0" width="1" height="4" fill="#303030"/>
<rect x="1249" y="152.0" width="1" height="4" fill="#303030"/><rect x="1251" y="152.0" width="1" height="4" fill="#303030"/><rect x="1253" y="152.0" width="1" height="4" fill="#303030"/><rect x="1255" y="152.0" width="1" height="4" fill="#303030"/><rect x="1257" y="152.0" width="1" height="4" fill="#303030"/><rect x="1259" y="152.0" width="1" height="4" fill="#303030"/><rect x="1261" y="152.0" width="1" height="4" fill="#303030"/><rect x="1263" y="152.0" width="1" height="4" fill="#303030"/><rect x="1265" y="152.0" width="1" height="4" fill="#303030"/><rect x="1267" y="152.0" width="1" height="4" fill="#303030"/>
<rect x="1249" y="248.0" width="1" height="4" fill="#303030"/><rect x="1251" y="248.0" width="1" height="4" fill="#303030"/><rect x="1253" y="248.0" width="1" height="4" fill="#303030"/><rect x="1255" y="248.0" width="1" height="4" fill="#303030"/><rect x="1257" y="248.0" width="1" height="4" fill="#303030"/><rect x="1259" y="248.0" width="1" height="4" fill="#303030"/><rect x="1261" y="248.0" width="1" height="4" fill="#303030"/><rect x="1263" y="248.0" width="1" height="4" fill="#303030"/><rect x="1265" y="248.0" width="1" height="4" fill="#303030"/><rect x="1267" y="248.0" width="1" height="4" fill="#303030"/>
<rect x="1249" y="344.0" width="1" height="4" fill="#303030"/><rect x="1251" y="344.0" width="1" height="4" fill="#303030"/><rect x="1253" y="344.0" width="1" height="4" fill="#303030"/><rect x="1255" y="344.0" width="1" height="4" fill="#303030"/><rect x="1257" y="344.0" width="1" height="4" fill="#303030"/><rect x="1259" y="344.0" width="1" height="4" fill="#303030"/><rect x="1261" y="344.0" width="1" height="4" fill="#303030"/><rect x="1263" y="344.0" width="1" height="4" fill="#303030"/><rect x="1265" y="344.0" width="1" height="4" fill="#303030"/><rect x="1267" y="344.0" width="1" height="4" fill="#303030"/>
<rect x="1249" y="440.0" width="1" height="4" fill="#303030"/><rect x="1251" y="440.0" width="1" height="4" fill="#303030"/><rect x="1253" y="440.0" width="1" height="4" fill="#303030"/><rect x="1255" y="440.0" width="1" height="4" fill="#303030"/><rect x="1257" y="440.0" width="1" height="4" fill="#303030"/><rect x="1259" y="440.0" width="1" height="4" fill="#303030"/><rect x="1261" y="440.0" width="1" height="4" fill="#303030"/><rect x="1263" y="440.0" width="1" height="4" fill="#303030"/><rect x="1265" y="440.0" width="1" height="4" fill="#303030"/><rect x="1267" y="440.0" width="1" height="4" fill="#303030"/>
<!-- palette -->
<path d="M1259.6,95.6 C1264.8,95.2 1268.8,98 1268.4,102.4 C1268,106.6 1263.6,110.2 1257.6,110.2 C1253.2,110.2 1250,108.2 1250.2,105.4 C1250.4,103.2 1252.6,103.4 1253.6,102.2 C1254.8,100.8 1253.2,99.6 1254.6,98 C1255.8,96.6 1257.6,95.8 1259.6,95.6 Z" fill="#cfcfcf"/>
<g fill="#484848"><circle cx="1254.8" cy="105.8" r="1.5"/><circle cx="1258.8" cy="107.2" r="1.4"/><circle cx="1262.6" cy="106" r="1.4"/><circle cx="1265.2" cy="103" r="1.4"/><circle cx="1264.4" cy="99.2" r="1.5"/></g>
<!-- color guide -->
<defs><linearGradient id="cg" x1="0" y1="1" x2="1" y2="0"><stop offset="0" stop-color="#dcdcdc"/><stop offset="0.55" stop-color="#7a7a7a"/><stop offset="1" stop-color="#5a5a5a"/></linearGradient>
<linearGradient id="gd" x1="0" y1="0" x2="1" y2="1"><stop offset="0" stop-color="#d2d2d2"/><stop offset="1" stop-color="#5a5a5a"/></linearGradient></defs>
<path d="M1252,123 C1260.6,123 1267.6,130 1267.8,138.6 H1252 Z" fill="url(#cg)" stroke="#d0d0d0" stroke-width="1.1"/>
<!-- swatches -->
<rect x="1251" y="166" width="16.6" height="11.8" fill="#c8c8c8"/>
<g fill="#6c6c6c"><rect x="1252.6" y="167.6" width="3.6" height="3.4"/><rect x="1262.4" y="167.6" width="3.6" height="3.4"/><rect x="1252.6" y="172.8" width="3.6" height="3.4"/><rect x="1257.5" y="172.8" width="3.6" height="3.4"/><rect x="1262.4" y="172.8" width="3.6" height="3.4"/></g>
<rect x="1257.5" y="167.6" width="3.6" height="3.4" fill="#a8a8a8"/>
<!-- brushes -->
<path d="M1255,199.4 H1264.2 L1263.6,209.4 H1255.6 Z" fill="#cfcfcf"/>
<path d="M1259.4,190.6 C1260.8,192 1261,195 1260.2,197.4 L1259.6,199.6 H1258.2 C1257.6,196.6 1257.8,192.8 1259.4,190.6 Z" fill="#cfcfcf"/>
<path d="M1253,193.6 C1254.8,194.4 1256.2,196.6 1256.8,199.6 L1255.4,199.8 C1253.8,198.2 1252.6,195.8 1253,193.6 Z" fill="#cfcfcf"/>
<path d="M1267.8,194.4 C1266,193.4 1263.4,194.6 1262.6,196.6 L1261.8,199.6 H1263.2 C1265.2,198.6 1267.2,196.8 1267.8,194.4 Z" fill="#cfcfcf"/>
<!-- symbols club -->
<circle cx="1259.8" cy="223.6" r="4.2" fill="#cfcfcf"/><circle cx="1255.4" cy="229" r="4.2" fill="#cfcfcf"/><circle cx="1264.2" cy="229" r="4.2" fill="#cfcfcf"/>
<path d="M1259,227 H1260.6 C1260.6,232 1261.6,234.6 1264,236.2 H1255.6 C1258,234.6 1259,232 1259,227 Z" fill="#cfcfcf"/>
<!-- stroke -->
<rect x="1251" y="261.6" width="17" height="1.6" fill="#cfcfcf"/><rect x="1251" y="265.4" width="17" height="2.6" fill="#cfcfcf"/><rect x="1251" y="270.2" width="17" height="3.8" fill="#cfcfcf"/>
<!-- gradient -->
<rect x="1251.4" y="289.7" width="16.4" height="12" fill="url(#gd)" stroke="#d0d0d0" stroke-width="1.1"/>
<!-- transparency -->
<circle cx="1256.6" cy="321.4" r="6.6" fill="#c6c6c6"/>
<circle cx="1261.4" cy="325.4" r="6.2" fill="#7c7c7c" stroke="#c6c6c6" stroke-width="1.2"/>
<!-- cc libraries -->
<path d="M1254,370.8 C1250.6,370.8 1248.8,368.4 1249,365.8 C1249.2,363.2 1251.2,361.6 1253,361.6 C1253.8,358.6 1256.4,357 1259,357 C1261.2,357 1262.8,358 1263.8,359.6 C1267.2,359.4 1269.8,361.8 1269.8,365.2 C1269.8,368.4 1267.6,370.8 1264.4,370.8 Z" fill="none" stroke="#d0d0d0" stroke-width="1.9"/>
<path d="M1253.6,366.4 C1253.6,364.6 1255.2,363.6 1256.8,364.4 L1262,368 C1263.8,369 1266,367.8 1266,365.8 C1266,364 1264.2,362.8 1262.6,363.6 L1257.4,367.2" fill="none" stroke="#d0d0d0" stroke-width="1.8"/>
<!-- appearance -->
<circle cx="1259.6" cy="392.6" r="7.8" fill="none" stroke="#cfcfcf" stroke-width="1.3" stroke-dasharray="1.6 1.4"/>
<circle cx="1259.6" cy="392.6" r="5.6" fill="#bcbcbc"/>
<!-- graphic styles -->
<rect x="1255" y="412.8" width="12.6" height="12.6" fill="none" stroke="#cfcfcf" stroke-width="1.2"/>
<rect x="1251.4" y="421.2" width="4.6" height="4.6" fill="#484848" stroke="#cfcfcf" stroke-width="1"/>
<rect x="1253.8" y="423.6" width="4.6" height="4.6" fill="#484848" stroke="#cfcfcf" stroke-width="1"/>
<!-- asset export -->
<path d="M1258.6,454.6 H1252 V467.6 H1265.4 V461.6" fill="none" stroke="#d2d2d2" stroke-width="1.8"/>
<path d="M1259.6,460.2 L1267,452.8 M1261.6,452 H1267.8 V458.2" fill="none" stroke="#d2d2d2" stroke-width="1.7"/>
<!-- layers -->
<path d="M1259.6,479.8 L1268,484.8 L1259.6,489.8 L1251.2,484.8 Z" fill="#d2d2d2"/>
<path d="M1253.4,488.6 L1251.2,489.9 L1259.6,496.4 L1268,489.9 L1265.8,488.6 L1259.6,492.4 Z" fill="#d2d2d2"/>
<!-- artboards -->
<rect x="1250.8" y="507.2" width="9.6" height="11.6" fill="none" stroke="#cfcfcf" stroke-width="1.2"/>
<rect x="1255.2" y="513.4" width="12.4" height="10.8" fill="#484848" stroke="#cfcfcf" stroke-width="1.2"/>
<!-- vscroll arrows + thumb -->
<path d="M1226,108 L1229.8,104.4 L1233.6,108" fill="none" stroke="#8c8c8c" stroke-width="1.5"/>
<path d="M1226.2,688.4 L1230,692.2 L1233.8,688.4" fill="none" stroke="#b8b8b8" stroke-width="1.5"/>
<rect x="1223.2" y="386.6" width="13.6" height="25.6" rx="6.6" fill="#575757"/>
</svg>
</div>
<!-- STATUS -->
<div id="statuscontent">
<div class="a" style="left:14px;top:700px;width:49px;height:15px;background:#3a3a3a"></div>
<div class="t st" style="left:17px;color:#e2e2e2">800%</div>
<div class="a" style="left:63.5px;top:700px;width:17.5px;height:15px;background:#454545;border-left:1px solid #505050"></div>
<div class="a" style="left:82px;top:700px;width:40px;height:15px;background:#484848"></div>
<div class="a" style="left:122.5px;top:700px;width:40px;height:15px;background:#3d3d3d"></div>
<div class="t st" style="left:126.5px;color:#e8e8e8">1</div>
<div class="a" style="left:163px;top:700px;width:17.5px;height:15px;background:#454545;border-left:1px solid #505050"></div>
<div class="a" style="left:181.5px;top:700px;width:40px;height:15px;background:#484848"></div>
<div class="t st" style="left:301.5px;color:#c8c8c8">Selection</div>
<div class="a" style="left:420px;top:700px;width:18px;height:15px;background:#4a4a4a"></div>
<div class="a" style="left:1222px;top:700px;width:15px;height:15px;background:#4c4c4c"></div>
<svg style="left:0;top:0" width="1280" height="720" viewBox="0 0 1280 720">
<path d="M68.2,707.2 L72,711 L75.8,707.2" fill="none" stroke="#e4e4e4" stroke-width="1.5"/>
<path d="M167.4,707.2 L171.2,711 L175,707.2" fill="none" stroke="#e4e4e4" stroke-width="1.5"/>
<g fill="#606060"><rect x="89.6" y="704.4" width="1.6" height="7.4"/><path d="M98.4,704.4 V711.8 L92.4,708.1 Z"/><path d="M113.4,704.4 V711.8 L107.4,708.1 Z"/>
<path d="M189.4,704.4 V711.8 L195.4,708.1 Z"/><path d="M204.4,704.4 V711.8 L210.4,708.1 Z"/><rect x="211.8" y="704.4" width="1.6" height="7.4"/></g>
<path d="M426.6,703.8 V712.4 L432.2,708.1 Z" fill="#e8e8e8"/>
<path d="M448.2,704.2 L444.8,707.9 L448.2,711.6" fill="none" stroke="#a0a0a0" stroke-width="1.4"/>
<path d="M1211.6,704.2 L1215.2,707.9 L1211.6,711.6" fill="none" stroke="#b0b0b0" stroke-width="1.4"/>
<rect x="810" y="702.4" width="25.4" height="11.6" rx="5.8" fill="#5a5a5a"/>
</svg>
</div>
</body>
</html>
